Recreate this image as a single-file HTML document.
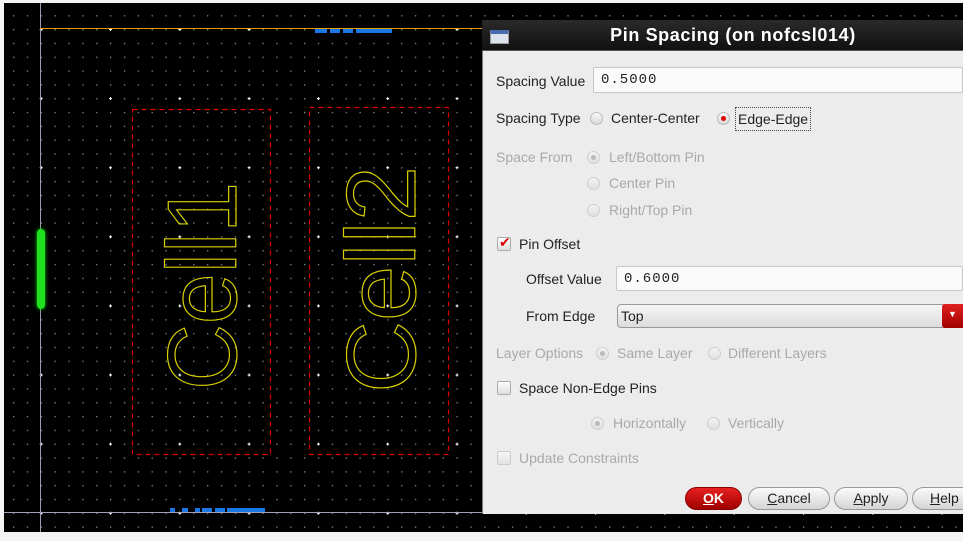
<!DOCTYPE html>
<html><head><meta charset="utf-8"><style>
*{margin:0;padding:0;box-sizing:border-box}
body{width:963px;height:541px;background:#f4f4f4;position:relative;overflow:hidden;font-family:"Liberation Sans","DejaVu Sans",sans-serif;font-size:14px;color:#222}
.a{position:absolute;white-space:nowrap}
.g{color:#a9a9a9}
.in{position:absolute;background:#fafafa;border:1px solid #c8c8c8;border-radius:2px;font-family:"Liberation Mono",monospace;font-size:14px;letter-spacing:1px;padding-left:7px;line-height:24px}
.rad{position:absolute;width:13px;height:13px;border-radius:50%;background:linear-gradient(#f8f8f8,#d8d8d8);border:1px solid #bbb}
.rad.on::after{content:"";position:absolute;left:3px;top:3px;width:5px;height:5px;border-radius:50%;background:#d00}
.rad.dis{opacity:.6}
.rad.dis.on::after{background:#999}
.cb{position:absolute;width:14px;height:14px;border:1px solid #aaa;border-radius:2px;background:linear-gradient(#fff,#ddd)}
.btn{position:absolute;top:487px;height:23px;border-radius:12px;border:1px solid #999;background:linear-gradient(#fbfbfb,#d4d4d4);text-align:center;line-height:21px;font-size:14px}
</style></head><body>
<svg class="a" style="left:0;top:0" width="963" height="541">
<defs>
<pattern id="mi" x="40.7" y="29" width="13.86" height="13.82" patternUnits="userSpaceOnUse"><rect x="0" y="0" width="1.3" height="1.3" fill="#8a8a8a"/></pattern>
<pattern id="ma" x="39.7" y="28" width="69.3" height="69.1" patternUnits="userSpaceOnUse"><rect x="0" y="1" width="3" height="1" fill="#fff"/><rect x="1" y="0" width="1" height="3" fill="#fff"/></pattern>
</defs>
<rect x="4" y="3" width="959" height="529" fill="#000"/>
<rect x="4" y="3" width="959" height="529" fill="url(#mi)"/>
<rect x="4" y="3" width="959" height="529" fill="url(#ma)"/>
<line x1="40.5" y1="3" x2="40.5" y2="532" stroke="#9a9ab0" stroke-width="1"/>
<line x1="40" y1="28.5" x2="963" y2="28.5" stroke="#e0a000" stroke-width="1"/>
<line x1="4" y1="512.5" x2="963" y2="512.5" stroke="#a0a0bb" stroke-width="1"/>
<g fill="#1a78e6"><rect x="315" y="29" width="12" height="4"/><rect x="330" y="29" width="10" height="4"/><rect x="343" y="29" width="10" height="4"/><rect x="356" y="29" width="36" height="4"/>
<rect x="170" y="508" width="5" height="4"/><rect x="182" y="508" width="6" height="4"/><rect x="195" y="508" width="5" height="4"/><rect x="202" y="508" width="10" height="4"/><rect x="215" y="508" width="10" height="4"/><rect x="227" y="508" width="38" height="4"/></g>
<rect x="37" y="229" width="8" height="80" rx="4" fill="#1ee01e" style="filter:drop-shadow(0 0 2px #0c0)"/>
<g fill="none" stroke="#d00" stroke-width="1.2" stroke-dasharray="5,4"><rect x="132.5" y="109.5" width="138" height="345"/><rect x="309.5" y="107.5" width="139" height="347"/></g>
<g fill="none" stroke="#d8d000" stroke-width="1.2" font-family="Liberation Sans" font-size="98">
<text transform="translate(236,390) rotate(-90)" textLength="208" lengthAdjust="spacingAndGlyphs">Cell1</text>
<text transform="translate(415,393) rotate(-90)" textLength="227" lengthAdjust="spacingAndGlyphs">Cell2</text>
</g>
</svg>
<div class="a" style="left:482px;top:20px;width:481px;height:494px;background:#ececec;border-left:1px solid #777"></div>
<div class="a" style="left:482px;top:20px;width:481px;height:31px;background:linear-gradient(#2a2a2a,#111);border-bottom:1px solid #555"></div>
<div class="a" style="left:490px;top:30px;width:19px;height:14px;background:#dde3ec;border:1px solid #999;border-top:4px solid #4a6ab0"></div>
<div class="a" style="left:560px;top:25px;width:346px;text-align:center;color:#fff;font-weight:bold;font-size:18px;letter-spacing:.6px">Pin Spacing (on nofcsl014)</div>

<div class="a" style="left:496px;top:73px">Spacing Value</div>
<div class="in" style="left:593px;top:67px;width:370px;height:26px">0.5000</div>

<div class="a" style="left:496px;top:110px">Spacing Type</div>
<div class="rad" style="left:590px;top:112px"></div>
<div class="a" style="left:611px;top:110px">Center-Center</div>
<div class="rad on" style="left:717px;top:112px"></div>
<div class="a" style="left:735px;top:107px;border:1px dotted #444;padding:2px 2px;line-height:18px">Edge-Edge</div>

<div class="a g" style="left:496px;top:149px">Space From</div>
<div class="rad dis on" style="left:587px;top:151px"></div>
<div class="a g" style="left:609px;top:149px">Left/Bottom Pin</div>
<div class="rad dis" style="left:587px;top:177px"></div>
<div class="a g" style="left:609px;top:175px">Center Pin</div>
<div class="rad dis" style="left:587px;top:204px"></div>
<div class="a g" style="left:609px;top:202px">Right/Top Pin</div>

<div class="cb" style="left:497px;top:237px"></div>
<div class="a" style="left:499px;top:234px;color:#d00;font-size:14px;font-weight:bold">✔</div>
<div class="a" style="left:519px;top:236px">Pin Offset</div>

<div class="a" style="left:526px;top:271px">Offset Value</div>
<div class="in" style="left:616px;top:266px;width:347px;height:25px">0.6000</div>

<div class="a" style="left:526px;top:308px">From Edge</div>
<div class="a" style="left:617px;top:304px;width:346px;height:24px;border:1px solid #999;border-radius:4px;background:linear-gradient(#f6f6f6,#dcdcdc);padding-left:3px;line-height:22px">Top</div>
<div class="a" style="left:942px;top:304px;width:21px;height:24px;background:linear-gradient(#e02020,#a00000);border-radius:3px 0 0 3px"></div>
<div class="a" style="left:948px;top:309px;color:#fff;font-size:9px">▼</div>

<div class="a g" style="left:496px;top:345px">Layer Options</div>
<div class="rad dis on" style="left:596px;top:347px"></div>
<div class="a g" style="left:617px;top:345px">Same Layer</div>
<div class="rad dis" style="left:708px;top:347px"></div>
<div class="a g" style="left:728px;top:345px">Different Layers</div>

<div class="cb" style="left:497px;top:381px"></div>
<div class="a" style="left:519px;top:380px">Space Non-Edge Pins</div>

<div class="rad dis on" style="left:591px;top:417px"></div>
<div class="a g" style="left:613px;top:415px">Horizontally</div>
<div class="rad dis" style="left:707px;top:417px"></div>
<div class="a g" style="left:728px;top:415px">Vertically</div>

<div class="cb" style="left:497px;top:451px;opacity:.5"></div>
<div class="a g" style="left:519px;top:450px">Update Constraints</div>

<div class="btn" style="left:685px;width:57px;background:linear-gradient(#e82020,#a00000);border-color:#800;color:#fff;font-weight:bold"><u>O</u>K</div>
<div class="btn" style="left:748px;width:82px"><u>C</u>ancel</div>
<div class="btn" style="left:834px;width:74px"><u>A</u>pply</div>
<div class="btn" style="left:912px;width:70px;text-align:left;padding-left:17px"><u>H</u>elp</div>
</body></html>
